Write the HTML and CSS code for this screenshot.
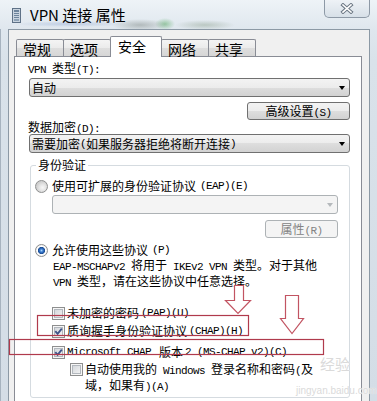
FILE: index.html
```html
<!doctype html>
<html>
<head>
    <meta charset="utf-8">
    <title>VPN 连接 属性</title>
    <link rel="stylesheet" href="styles.css">
</head>
<body>
<div class="window">
    <div class="titlebar">
        <svg class="appicon" width="9" height="15" viewBox="0 0 9 15">
            <rect x="0.5" y="0.5" width="8" height="14" fill="#c9d4df" stroke="#5f7287"/>
            <rect x="2" y="2" width="5" height="2" fill="#6d849c"/>
            <rect x="2" y="5" width="5" height="1" fill="#6d849c"/>
            <rect x="2" y="7" width="5" height="1" fill="#6d849c"/>
            <rect x="2" y="9" width="5" height="1" fill="#6d849c"/>
            <rect x="2" y="11" width="5" height="2" fill="#8ea2b6"/>
        </svg>
        <span class="title">VPN 连接 属性</span>
        <div class="close">
            <svg width="14" height="11" viewBox="0 0 14 11">
                <path d="M3 2 L11 9 M11 2 L3 9" stroke="#6b7784" stroke-width="3.6" stroke-linecap="square"/>
                <path d="M3 2 L11 9 M11 2 L3 9" stroke="#fff" stroke-width="1.6" stroke-linecap="square"/>
            </svg>
        </div>
    </div>
    <div class="client">
        <div class="tabs">
            <div class="tab">常规</div>
            <div class="tab">选项</div>
            <div class="tab active">安全</div>
            <div class="tab">网络</div>
            <div class="tab">共享</div>
        </div>
        <div class="panel">
            <div class="label"><span class="m">VPN </span>类型<span class="m">(T):</span></div>
            <div class="combo">自动</div>
            <div class="btnrow"><div class="button">高级设置<span class="m">(S)</span></div></div>
            <div class="label">数据加密<span class="m">(D):</span></div>
            <div class="combo second">需要加密<span class="m">(</span>如果服务器拒绝将断开连接<span class="m">)</span></div>

            <fieldset class="group">
                <legend>身份验证</legend>
                <div class="opt"><span class="radio"></span>使用可扩展的身份验证协议<span class="m">(EAP)(E)</span></div>
                <div class="combo off"></div>
                <div class="btnrow tight"><div class="button off">属性<span class="m">(R)</span></div></div>
                <div class="opt gap"><span class="radio on"></span>允许使用这些协议<span class="m">(P)</span></div>
                <div class="desc"><span class="m">EAP-MSCHAPv2 </span>将用于<span class="m"> IKEv2 VPN </span>类型。对于其他<br><span class="m">VPN </span>类型，请在这些协议中任意选择。</div>
                <div class="cbrow first"><span class="cb"></span>未加密的密码<span class="m">(PAP)(U)</span></div>
                <div class="cbrow near"><span class="cb"><svg width="11" height="11" viewBox="0 0 11 11"><path d="M2.3 5.2 L4.6 7.8 L8.8 2.6" fill="none" stroke="#3f5489" stroke-width="1.9"/></svg></span>质询握手身份验证协议<span class="m">(CHAP)(H)</span></div>
                <div class="cbrow mid"><span class="cb"><svg width="11" height="11" viewBox="0 0 11 11"><path d="M2.3 5.2 L4.6 7.8 L8.8 2.6" fill="none" stroke="#3f5489" stroke-width="1.9"/></svg></span><span class="m">Microsoft CHAP&nbsp;</span>版本<span class="m"> 2 (MS-CHAP v2)(C)</span></div>
                <div class="cbrow sub"><span class="cb"></span><div>自动使用我的<span class="m"> Windows </span>登录名称和密码<span class="m">(</span>及<br>域，如果有<span class="m">)(A)</span></div></div>
            </fieldset>
        </div>
    </div>

    <div class="watermark">
        <span class="wm-logo">经验</span>
        <span class="wm-url">jingyan.baidu.com</span>
    </div>

    <svg class="marks" width="377" height="401" viewBox="0 0 377 401">
        <rect x="37.5" y="315.5" width="211" height="20" fill="none" stroke="#b03a4c" stroke-width="1.2"/>
        <rect x="9.5" y="339.5" width="314" height="15" fill="none" stroke="#b03a4c" stroke-width="1.2"/>
        <path d="M234.5 285.5 H243.5 V300.5 H250.5 L238 313.5 L225.5 300.5 H234.5 Z" fill="#fff" stroke="#c25462" stroke-width="1.2"/>
        <path d="M285.5 295.5 H298.5 V318.5 H303.5 L292 333.5 L280.5 318.5 H285.5 Z" fill="#fff" stroke="#c25462" stroke-width="1.2"/>
    </svg>
</div>
</body>
</html>
```

FILE: styles.css
```css
html, body {
    margin: 0;
}

body {
    width: 377px;
    height: 401px;
    overflow: hidden;
    font: 12px/14px "Noto Sans CJK SC", sans-serif;
    color: #000;
}

/* латинские куски как в SimSun: моноширинные, 6px на знак */
.m {
    font-family: "Liberation Mono", monospace;
    font-size: 11px;
    letter-spacing: -0.6px;
}

.window {
    position: relative;
    height: 401px;
    display: flex;
    flex-direction: column;
    background: linear-gradient(180deg, #e4ebf2 0, #d9e2ea 60px, #d4dde6 100%);
    box-shadow: inset 1px 0 #a7b3bf;
}

.titlebar {
    height: 29px;
    flex: none;
    display: flex;
    align-items: center;
    padding: 0 7px 0 12px;
    background:
        radial-gradient(ellipse 28px 6px at 140px 25px, rgba(120, 130, 125, .45), transparent),
        radial-gradient(ellipse 10px 6px at 165px 24px, rgba(90, 170, 100, .55), transparent),
        radial-gradient(ellipse 30px 5px at 205px 25px, rgba(140, 160, 140, .45), transparent),
        radial-gradient(ellipse 55px 3px at 70px 24px, rgba(120, 150, 200, .35), transparent),
        linear-gradient(180deg, #eef3f7, #dfe7ee);
}

.appicon {
    display: block;
    margin-top: 1px;
}

.title {
    margin-left: 9px;
    font-size: 15px;
    line-height: 18px;
}

.close {
    margin-left: auto;
    align-self: flex-start;
    width: 46px;
    height: 18px;
    box-sizing: border-box;
    border: 1px solid #8d99a6;
    border-top: 0;
    border-radius: 0 0 5px 5px;
    background: linear-gradient(#eef2f6, #d7e0e8);
    display: flex;
    align-items: center;
    justify-content: center;
}

.close svg {
    display: block;
}

.client {
    flex: 1;
    margin: 0 7px 0 8px;
    border: 1px solid #8c99a5;
    border-bottom: 0;
    background: #f0f0f0;
    padding: 6px 7px 0 5px;
    display: flex;
    flex-direction: column;
}

.tabs {
    display: flex;
    align-items: flex-end;
    height: 20px;
    padding-left: 2px;
    position: relative;
    z-index: 1;
}

.tab {
    width: 48px;
    height: 17px;
    box-sizing: border-box;
    margin-left: -1px;
    padding: 1px 0 0 6px;
    border: 1px solid #898c95;
    border-bottom: 0;
    border-radius: 2px 2px 0 0;
    background: linear-gradient(#f4f4f4 0, #ebebeb 50%, #dedede 51%, #d6d6d6 100%);
    font-size: 14px;
    line-height: 16px;
}

.tab:first-child {
    margin-left: 0;
}

.tab.active {
    width: 52px;
    height: 21px;
    margin-bottom: -1px;
    padding-left: 7px;
    background: #fff;
}

.panel {
    flex: 1;
    background: #fff;
    border: 1px solid #898c95;
    border-bottom: 0;
    padding: 4px 11px 0 14px;
}

.label {
    height: 14px;
    margin-left: -1px;
}

.combo {
    height: 19px;
    box-sizing: border-box;
    margin-top: 3px;
    border: 1px solid #707070;
    border-radius: 3px;
    background: linear-gradient(#f3f3f3 0, #ececec 50%, #dedede 50%, #d2d2d2 100%);
    display: flex;
    align-items: center;
    padding: 0 4px 0 2px;
}

.combo::after {
    content: "";
    margin-left: auto;
    border-style: solid;
    border-width: 4px 3.5px 0;
    border-color: #000 transparent transparent;
}

.combo.second {
    margin-top: 0;
}

.combo.off {
    margin: 1px 0 0 17px;
    border-color: #adb2b5;
    background: #f4f4f4;
}

.combo.off::after {
    border-top-color: #b5b9bc;
}

.btnrow {
    display: flex;
    justify-content: flex-end;
    margin-top: 5px;
}

.btnrow.tight {
    margin-top: 6px;
}

.button {
    width: 103px;
    height: 18px;
    box-sizing: border-box;
    border: 1px solid #707070;
    border-radius: 3px;
    background: linear-gradient(#f3f3f3 0, #ececec 50%, #dedede 50%, #d2d2d2 100%);
    text-align: center;
    line-height: 16px;
}

.button.off {
    width: 73px;
    color: #838383;
    border-color: #adb2b5;
    background: #f4f4f4;
}

.group {
    margin: 5px 0 0 1px;
    padding: 6px 11px 3px 4px;
    border: 1px solid #d5dbe0;
    border-radius: 3px;
    min-width: 0;
}

.group legend {
    padding: 0 2px;
    margin-left: 1px;
    line-height: 14px;
}

.opt {
    display: flex;
    align-items: center;
    gap: 4px;
    height: 16px;
}

.opt.gap {
    margin-top: 4px;
}

.radio {
    width: 13px;
    height: 13px;
    box-sizing: border-box;
    border: 1px solid #8e8f8f;
    border-radius: 50%;
    background: radial-gradient(circle at 60% 60%, #f7f7f7 0, #e6e6e6 3px, #cfcfcf 6px);
}

.radio.on {
    background: radial-gradient(circle, #a8d8fa 0, #3a7ad0 1.6px, #1b4e95 3.2px, #fff 4px, #ececec 6px);
}

.desc {
    margin: 0 0 0 18px;
    line-height: 13px;
}

.cbrow {
    display: flex;
    align-items: center;
    gap: 2px;
    height: 16px;
    margin-left: 17px;
}

.cbrow.first {
    margin-top: 15px;
}

.cbrow.near {
    margin-top: 2px;
}

.cbrow.mid {
    margin-top: 5px;
}

.cbrow.sub {
    margin: 2px 0 0 35px;
    height: auto;
    align-items: flex-start;
}

.cbrow.sub .cb {
    margin-top: 1px;
}

.cb {
    width: 13px;
    height: 13px;
    flex: none;
    box-sizing: border-box;
    border: 1px solid #8e8f8f;
    background: linear-gradient(135deg, #cdd1d6, #f8f8f8);
    box-shadow: inset 0 0 0 1px #f6f6f6, inset 0 0 0 2px #b3b8be;
}

.cb svg {
    display: block;
}

.watermark {
    position: absolute;
    left: 296px;
    top: 355px;
    width: 80px;
    color: #dadada;
    text-shadow: 0 0 1px #fff;
}

.wm-logo {
    display: block;
    padding-left: 24px;
    font-size: 15px;
    line-height: 18px;
}

.wm-url {
    display: block;
    margin-top: 12px;
    font: 10px/12px "Liberation Sans", sans-serif;
}

.marks {
    position: absolute;
    left: 0;
    top: 0;
    pointer-events: none;
}
```
